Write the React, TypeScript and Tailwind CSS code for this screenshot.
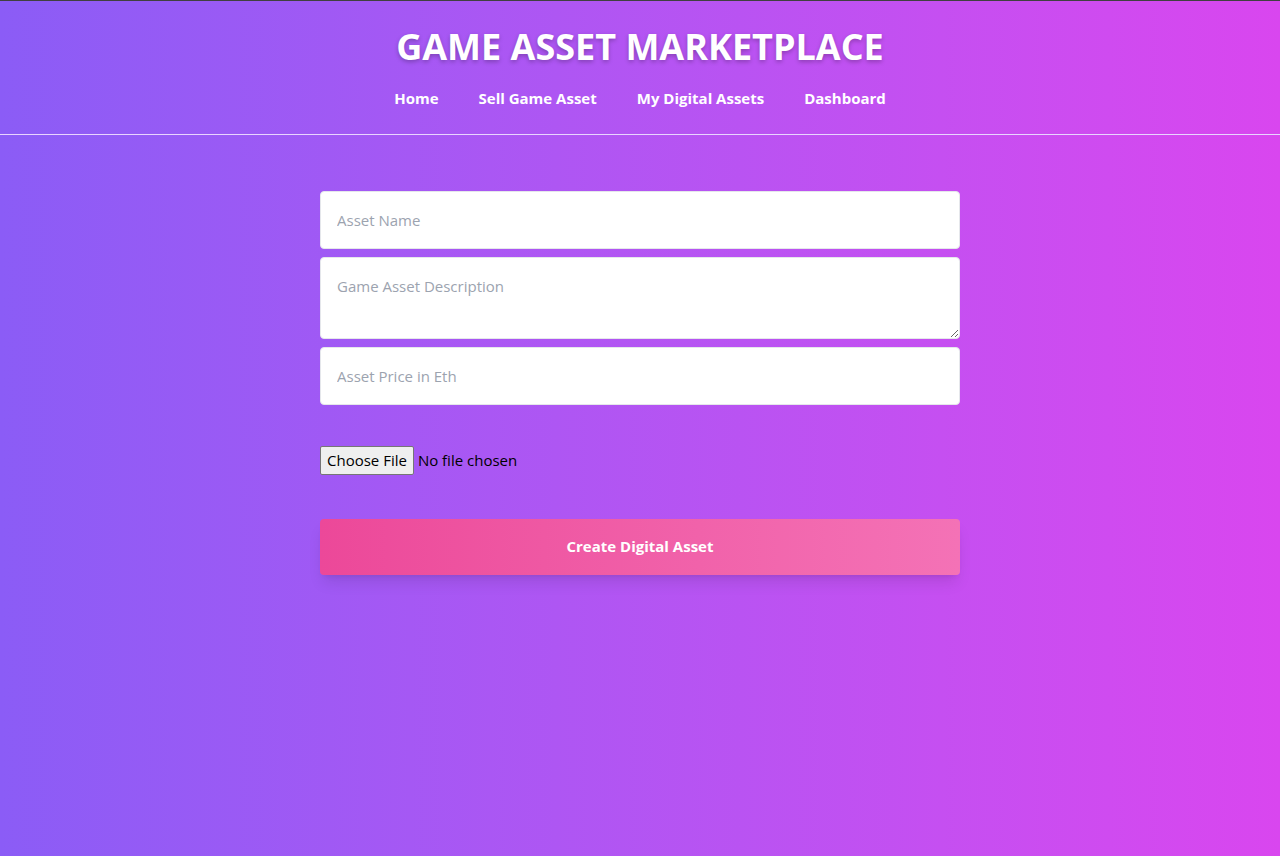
const navLinks = ['Home', 'Sell Game Asset', 'My Digital Assets', 'Dashboard'];

export default function App() {
    return <div className="min-h-[856px] flex flex-col bg-gradient-to-r from-[#8b5cf6] to-[#d946ef] font-['Open_Sans',sans-serif] border-t border-[#404040]">
        <header className="flex flex-col items-center border-b border-[#e9d5ff] pt-[24px] pb-[25px]">
            <h1 className="text-[36px] leading-[44px] font-bold text-white [text-shadow:0_2px_4px_rgba(0,0,0,0.25)]">GAME ASSET MARKETPLACE</h1>
            <nav className="flex gap-10 mt-[18px]">
                {navLinks.map(link => (
                    <a key={link} href="#" className="text-white font-bold text-[15px] leading-[22px]">{link}</a>
                ))}
            </nav>
        </header>

        <main className="flex justify-center pt-[56px]">
            <div className="w-[640px] flex flex-col">
                <input type="text" placeholder="Asset Name"
                    className="h-[58px] bg-white border border-[#e5e7eb] rounded px-4 text-[15px] placeholder:text-[#9ca3af] outline-none" />
                <textarea placeholder="Game Asset Description"
                    className="mt-[8px] h-[82px] bg-white border border-[#e5e7eb] rounded px-4 pt-[17px] text-[15px] placeholder:text-[#9ca3af] outline-none" />
                <input type="text" placeholder="Asset Price in Eth"
                    className="mt-[8px] h-[58px] bg-white border border-[#e5e7eb] rounded px-4 text-[15px] placeholder:text-[#9ca3af] outline-none" />
                <input type="file"
                    className="mt-[41px] text-[15px] text-black file:mr-1 file:px-[6px] file:py-[2px] file:bg-[#efefef] file:border file:border-[#767676] file:rounded-[2px] file:text-black" />
                <button className="mt-[44px] h-[56px] rounded bg-gradient-to-r from-[#ec4899] to-[#f472b6] text-white font-bold text-[15px] shadow-lg">
                    Create Digital Asset
                </button>
            </div>
        </main>
    </div>
}
